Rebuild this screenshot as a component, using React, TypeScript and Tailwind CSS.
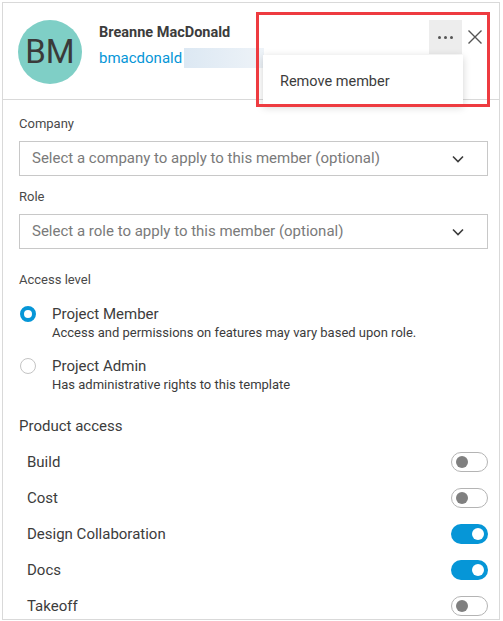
import React from "react";

function Toggle({ on }: { on: boolean }) {
  return on ? (
    <div className="w-[37px] h-[20px] rounded-full bg-[#0696d7] flex items-center justify-end pr-[4px]">
      <div className="w-[12px] h-[12px] rounded-full bg-white" />
    </div>
  ) : (
    <div className="w-[37px] h-[20px] rounded-full bg-white border border-[#b4b4b4] flex items-center pl-[4px]">
      <div className="w-[12px] h-[12px] rounded-full bg-[#808080]" />
    </div>
  );
}

function Chevron() {
  return (
    <svg width="14" height="14" viewBox="0 0 14 14" fill="none">
      <path d="M2 4.5 L7 9.5 L12 4.5" stroke="#3c3c3c" strokeWidth="1.6" />
    </svg>
  );
}

function Select({ text }: { text: string }) {
  return (
    <div className="h-[35px] border border-[#c8c8c8] flex items-center justify-between pl-[12px] pr-[22px]">
      <span className="text-[15px] text-[#7a7a7a]">{text}</span>
      <Chevron />
    </div>
  );
}

export default function App() {
  const products: [string, boolean][] = [
    ["Build", false],
    ["Cost", false],
    ["Design Collaboration", true],
    ["Docs", true],
    ["Takeoff", false],
  ];
  return (
    <div
      className="w-[503px] h-[621px] bg-white relative overflow-hidden pt-[2px] pl-[2px]"
      style={{ fontFamily: 'Roboto, sans-serif' }}
    >
      <div className="w-[498px] h-[618px] border border-[#d9d9d9] text-[#3c3c3c]">
        {/* header */}
        <div className="h-[97px] border-b border-[#d9d9d9] flex pl-[15px] pt-[17px] relative">
          <div className="w-[64px] h-[64px] rounded-full bg-[#7fcfc6] flex items-center justify-center text-[33px] text-[#3a3a3a] shrink-0">
            BM
          </div>
          <div className="ml-[17px] pt-[3px]">
            <div className="text-[14.5px] font-bold leading-[20px] text-[#3c3c3c]">Breanne MacDonald</div>
            <div className="flex items-center mt-[5px]">
              <span className="text-[15px] leading-[20px] text-[#0696d7]">bmacdonald</span>
              <div className="ml-[2px] w-[80px] h-[20px] bg-gradient-to-r from-[#dce8f3] to-[#eef3f8]" />
            </div>
          </div>
          <div className="ml-auto flex items-start pr-[11px]">
            <div className="w-[33px] h-[34px] bg-[#ededed] flex items-center justify-center gap-[3px]">
              <span className="w-[3px] h-[3px] rounded-full bg-[#555]" />
              <span className="w-[3px] h-[3px] rounded-full bg-[#555]" />
              <span className="w-[3px] h-[3px] rounded-full bg-[#555]" />
            </div>
            <div className="w-[26px] h-[34px] flex items-center justify-center">
              <svg width="16" height="16" viewBox="0 0 16 16">
                <path d="M1.5 1.5 L14.5 14.5 M14.5 1.5 L1.5 14.5" stroke="#555" strokeWidth="1.4" />
              </svg>
            </div>
          </div>
        </div>

        {/* form */}
        <div className="pl-[16px] pr-[11px] pt-[15px]">
          <div className="text-[13px] leading-[18px] text-[#4a4a4a]">Company</div>
          <div className="mt-[8px]">
            <Select text="Select a company to apply to this member (optional)" />
          </div>
          <div className="text-[13px] leading-[18px] text-[#4a4a4a] mt-[12px]">Role</div>
          <div className="mt-[8px]">
            <Select text="Select a role to apply to this member (optional)" />
          </div>

          <div className="text-[13px] leading-[18px] text-[#4a4a4a] mt-[22px]">Access level</div>

          <div className="flex mt-[15px]">
            <div className="w-[16px] h-[16px] rounded-full border-[4px] border-[#0696d7] mt-[2px] ml-[1px] shrink-0" />
            <div className="ml-[16px]">
              <div className="text-[15px] leading-[20px] text-[#3c3c3c]">Project Member</div>
              <div className="text-[13px] leading-[18px] text-[#3c3c3c]">Access and permissions on features may vary based upon role.</div>
            </div>
          </div>
          <div className="flex mt-[14px]">
            <div className="w-[16px] h-[16px] rounded-full border border-[#c4c4c4] mt-[2px] ml-[1px] shrink-0" />
            <div className="ml-[16px]">
              <div className="text-[15px] leading-[20px] text-[#3c3c3c]">Project Admin</div>
              <div className="text-[13px] leading-[18px] text-[#3c3c3c]">Has administrative rights to this template</div>
            </div>
          </div>

          <div className="text-[15px] leading-[20px] text-[#3c3c3c] mt-[22px]">Product access</div>
          <div className="mt-[8px]">
            {products.map(([name, on]) => (
              <div key={name} className="h-[36px] flex items-center justify-between pl-[8px]">
                <span className="text-[15px] text-[#3c3c3c]">{name}</span>
                <Toggle on={on} />
              </div>
            ))}
          </div>
        </div>
      </div>

      {/* dropdown menu */}
      <div className="absolute left-[263px] top-[55px] w-[200px] h-[50px] bg-white shadow-[0_2px_8px_rgba(0,0,0,0.18)] flex items-center pl-[17px] pt-[3px] text-[14.5px] text-[#3c3c3c]">
        Remove member
      </div>
      {/* annotation box */}
      <div className="absolute left-[256px] top-[12px] w-[234px] h-[95px] border-[3px] border-[#ee3b40] pointer-events-none" />
    </div>
  );
}
